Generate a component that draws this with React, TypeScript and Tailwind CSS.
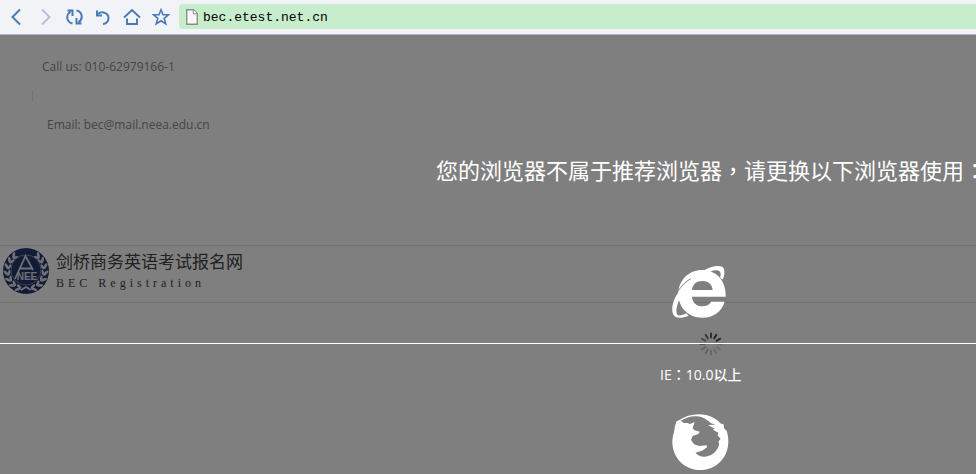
import type { ReactNode } from 'react';

/**
 * Browser window showing the BEC registration site behind the
 * "unsupported browser" notice.
 */

const NavButton = ({ label, disabled, children }: { label: string; disabled?: boolean; children: ReactNode }) => (
  <button
    type="button"
    aria-label={label}
    disabled={disabled}
    className="flex h-7 w-7 items-center justify-center text-[#4a7ab8] disabled:text-[#b4c3da]"
  >
    <svg viewBox="0 0 18 18" className="h-[18px] w-[18px]" fill="none" stroke="currentColor" strokeWidth="2">
      {children}
    </svg>
  </button>
);

const Toolbar = () => (
  <header className="flex h-[35px] items-center border-b border-[#a8b8c8] bg-[#f1f3f6] pb-px pl-[2px]">
    <nav aria-label="Browser" className="flex w-[177px] shrink-0 gap-px">
      <NavButton label="Back">
        <path d="M13 1.500 5.500 9l7.500 7.500" />
      </NavButton>
      <NavButton label="Forward" disabled>
        <path d="m6 1.500 7.500 7.500L6 16.500" />
      </NavButton>
      <NavButton label="Reload">
        <path d="M7.500 15.500C1 14 .8 7 5.500 3.500M2.500 2.500h5v5.500M11.500 2.500c6.500 1.500 6.700 8.500 2 12M16.500 15.500h-5V10" />
      </NavButton>
      <NavButton label="Undo">
        <path d="M4 6C8 2.500 14.500 5 14.500 10c0 3.500-2.500 5.800-5.500 6" />
        <path d="M3 2.500v5h5" />
      </NavButton>
      <NavButton label="Home">
        <path d="M1 9.500 9 2l8 7.500M4 10.500V16h10v-5.500" />
      </NavButton>
      <NavButton label="Favourites">
        <path
          d="m9 1.800 2 5h5.500l-4.300 3.600 1.600 5.600L9 12.800 4.200 16l1.600-5.600L1.500 6.800H7z"
          strokeWidth="1.600"
        />
      </NavButton>
    </nav>
    <label className="flex h-[25px] min-w-0 flex-1 items-center gap-[5px] rounded-l-sm bg-[#c7edcc] pl-[7px]">
      <svg viewBox="0 0 12 16" className="h-4 w-3 shrink-0" aria-hidden="true">
        <path d="M.7.7h6.800l3.800 3.800v10.800H.7z" fill="#f6f6f6" stroke="#8e8e8e" strokeWidth="1.400" />
        <path d="M7.300.8v4h4" fill="#fff" stroke="#8e8e8e" />
      </svg>
      <input
        type="text"
        aria-label="Address"
        defaultValue="bec.etest.net.cn"
        className="min-w-0 flex-1 bg-transparent pt-[2px] font-['Liberation_Mono',monospace] text-[13px] text-black outline-none"
      />
    </label>
  </header>
);

const Emblem = () => (
  <svg viewBox="0 0 46 46" className="h-[46px] w-[46px] shrink-0" role="img" aria-label="NEEA">
    <circle cx="23" cy="23" r="23" fill="#24386e" />
    <g fill="#e0e2e8">
      {[-156, -136, -116, -96, -76, -56, -38].map((a) => (
        <g key={a}>
          <ellipse cx="23" cy="3" rx="1.400" ry="3.200" transform={`rotate(${a} 23 23) rotate(50 23 3)`} />
          <ellipse cx="23" cy="6" rx="1.300" ry="3" transform={`rotate(${a} 23 23) rotate(110 23 6)`} />
          <ellipse cx="23" cy="3" rx="1.400" ry="3.200" transform={`rotate(${-a} 23 23) rotate(-50 23 3)`} />
          <ellipse cx="23" cy="6" rx="1.300" ry="3" transform={`rotate(${-a} 23 23) rotate(-110 23 6)`} />
        </g>
      ))}
    </g>
    <circle cx="23" cy="22" r="15" fill="#24386e" stroke="#8c98b8" strokeWidth=".8" />
    <path d="M12 31 22.500 8 30 22M17 20.500h11.500M18 42l5-3 5 3" fill="none" stroke="#e0e2e8" strokeWidth="1.800" />
    <text x="24" y="32" textAnchor="middle" fill="#e0e2e8" className="font-['Liberation_Sans',sans-serif] text-[10px] font-bold">
      NEE
    </text>
  </svg>
);

const SitePage = () => (
  <div className="bg-white">
    <ul className="h-[210px] pt-[17px] font-['Open_Sans',sans-serif] text-xs leading-[29px] text-[#8c8c8c]">
      <li className="pl-[42px]">Call us: 010-62979166-1</li>
      <li className="flex h-[29px] items-center pl-8" aria-hidden="true">
        <span className="h-3 w-px bg-[#e4e4f0]" />
      </li>
      <li className="pl-[47px]">Email: bec@mail.neea.edu.cn</li>
    </ul>
    <div className="flex h-[58px] items-start gap-[7px] border-y border-[#e4e4e4] pl-[3px] pt-[2px]">
      <Emblem />
      <div className="flex flex-col gap-[2px] pt-px">
        <h1 className="font-['Noto_Sans_CJK_SC',sans-serif] text-[17px] leading-6 text-[#444]">剑桥商务英语考试报名网</h1>
        <p className="font-['Liberation_Serif',serif] text-xs leading-4 tracking-[4px] text-[#444]">BEC Registration</p>
      </div>
    </div>
  </div>
);

const Spinner = () => (
  <svg viewBox="-12 -12 24 24" className="absolute left-[699px] top-[297px] h-6 w-6" aria-hidden="true">
    {[0, 1, 2, 3, 4, 5, 6, 7, 8, 9, 10, 11].map((i) => (
      <path
        key={i}
        d="M0-6.500v-4"
        stroke="#222"
        strokeWidth="2"
        strokeLinecap="round"
        opacity={[0.85, 0.95, 1, 0.2, 0.2, 0.22, 0.26, 0.3, 0.35, 0.45, 0.6, 0.75][i]}
        transform={`rotate(${i * 30})`}
      />
    ))}
  </svg>
);

const IeIcon = () => (
  <svg viewBox="36 33 162 159" className="h-[53px] w-[54px]" fill="#fff" role="img" aria-label="Internet Explorer">
    <path
      fillRule="evenodd"
      d="M197 125H96c1 18 14 29 31 29 12 0 22-5 26-14h41c-9 30-34 48-67 48-41 0-72-29-72-71 0-41 31-72 72-72 43 0 72 34 70 80ZM96 105h62c-1-17-14-27-31-27s-30 10-31 27Z"
    />
    <path d="M92 78C62 98 43 124 38 150c-6 33 8 47 48 32l-7-7c-24 12-33 7-29-17 3-16 10-30 20-42L92 78Z" />
    <path d="M130 47c20-12 45-18 58-11 8 9 6 24 0 38l-8-6c7-20-4-28-30-18l-20-3Z" />
    <path d="M55 107c9-14 22-27 37-36" fill="none" stroke="#808080" strokeWidth="3" />
  </svg>
);

const FirefoxIcon = () => (
  <svg viewBox="36 26 171 168" className="h-14 w-[57px]" fill="#fff" role="img" aria-label="Firefox">
    <path
      fillRule="evenodd"
      d="M54 46c42-28 97-26 129 9l7 1 3 14 7 6c20 66-23 118-79 118C61 194 23 137 42 80l3-18 5-15ZM62 46l10 7c10-1 15 1 18 3l14-6-6 18 4 6 17 5-4 7-17 6-5 12 9 13 16 5 22-2 1 6-15 10-20 6c8 9 18 13 29 12 25-3 37-19 42-35l-1-11 6-8-9-9 2-9-16-9 5-3-20-11 22-1-14-5C123 24 89 30 62 46Z"
    />
  </svg>
);

const BrowserNotice = () => (
  <div className="absolute inset-0 overflow-hidden bg-black/50 text-white">
    <Spinner />
    <div className="relative font-['Noto_Sans_CJK_SC',sans-serif]">
      <h2 className="pl-[436px] pt-[118px] text-[22px] leading-8 whitespace-nowrap">
        您的浏览器不属于推荐浏览器
        <span className="font-['Noto_Sans_CJK_TC',sans-serif]">，</span>
        请更换以下浏览器使用
        <span className="font-['Noto_Sans_CJK_TC',sans-serif]">：</span>
      </h2>
      <div className="pb-6 pl-[672px] pt-[81px]">
        <IeIcon />
      </div>
      <div className="border-t border-white pb-[29px] pl-[660px] pt-5">
        <p className="font-['Open_Sans','Noto_Sans_CJK_SC',sans-serif] text-sm leading-5 font-medium whitespace-nowrap">
          IE<span className="font-['Noto_Sans_CJK_TC',sans-serif]">：</span>10.0以上
        </p>
      </div>
      <div className="pl-[672px]">
        <FirefoxIcon />
      </div>
    </div>
  </div>
);

export default function App() {
  return (
    <div className="flex min-h-screen flex-col">
      <Toolbar />
      <main className="relative flex-1 bg-white">
        <SitePage />
        <BrowserNotice />
      </main>
    </div>
  );
}
